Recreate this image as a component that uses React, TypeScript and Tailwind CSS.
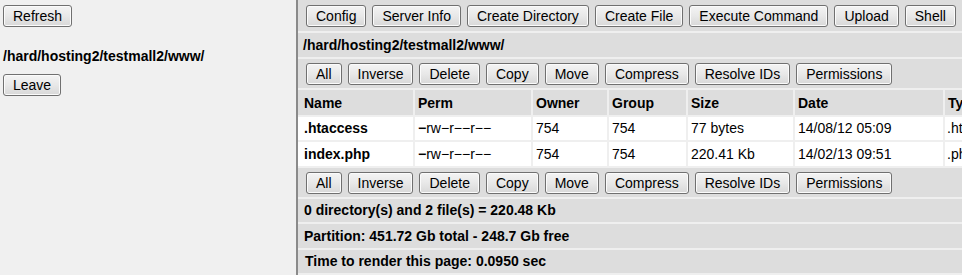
import React from 'react';

const Btn: React.FC<{ children: React.ReactNode }> = ({ children }) => (
  <button className="h-[22px] shrink-0 whitespace-nowrap rounded-[3px] border border-[#707070] bg-linear-to-b from-[#f4f4f4] via-[#e8e8e8] to-[#d8d8d8] px-[9px] text-[14px] leading-none text-black shadow-[inset_0_0_0_1px_#fbfbfb]">
    {children}
  </button>
);

const actions = ['All', 'Inverse', 'Delete', 'Copy', 'Move', 'Compress', 'Resolve IDs', 'Permissions'];

const files = [
  { name: '.htaccess', owner: '754', group: '754', size: '77 bytes', date: '14/08/12 05:09', type: '.htaccess', h: 'h-[23px]' },
  { name: 'index.php', owner: '754', group: '754', size: '220.41 Kb', date: '14/02/13 09:51', type: '.php', h: 'h-[24px]' },
];

const cols = 'grid grid-cols-[115px_116px_74px_77px_105px_148px_120px] gap-x-[2px]';

const ActionRow: React.FC<{ h: string }> = ({ h }) => (
  <div className={`flex items-center gap-[6px] bg-[#dddddd] pl-[8px] ${h}`}>
    {actions.map((a) => (
      <Btn key={a}>{a}</Btn>
    ))}
  </div>
);

const App: React.FC = () => {
  return (
    <div className="flex h-[275px] w-[962px] overflow-hidden font-['Liberation_Sans',Arial,sans-serif] text-[14px] text-black">
      {/* left frame */}
      <div className="w-[296px] shrink-0 bg-[#f0f0f0] pl-[3px] pt-[5px]">
        <Btn>Refresh</Btn>
        <div className="mt-[21px] font-bold leading-[16px]">/hard/hosting2/testmall2/www/</div>
        <div className="mt-[10px]">
          <Btn>Leave</Btn>
        </div>
      </div>
      <div className="w-[2px] shrink-0 bg-[#8a8a8a]" />

      {/* right frame */}
      <div className="flex min-w-0 flex-1 flex-col gap-y-[2px] overflow-hidden bg-[#efefef]">
        <div className="flex h-[31px] shrink-0 items-center gap-[6px] bg-[#dddddd] pl-[8px]">
          {['Config', 'Server Info', 'Create Directory', 'Create File', 'Execute Command', 'Upload', 'Shell'].map((b) => (
            <Btn key={b}>{b}</Btn>
          ))}
        </div>
        <div className="flex h-[24px] shrink-0 items-center bg-[#dddddd] pl-[5px] font-bold">/hard/hosting2/testmall2/www/</div>
        <ActionRow h="h-[29px] shrink-0" />

        <div className="flex shrink-0 flex-col gap-y-[2px]">
          <div className={`${cols} h-[25px] items-center`}>
            {['Name', 'Perm', 'Owner', 'Group', 'Size', 'Date', 'Type'].map((c, i) => (
              <div key={c} className={`flex h-full items-center bg-[#dddddd] pt-[1px] font-bold ${i === 0 ? 'pl-[6px]' : 'pl-[3px]'}`}>
                {c}
              </div>
            ))}
          </div>
          {files.map((f) => (
            <div key={f.name} className={`${cols} ${f.h}`}>
              <div className="flex items-center bg-white pl-[6px] font-bold">{f.name}</div>
              <div className="flex items-center bg-white pl-[3px]">
                <b>−</b>
                <span>rw−r−−r−−</span>
              </div>
              <div className="flex items-center bg-white pl-[3px]">{f.owner}</div>
              <div className="flex items-center bg-white pl-[3px]">{f.group}</div>
              <div className="flex items-center bg-white pl-[3px]">{f.size}</div>
              <div className="flex items-center bg-white pl-[3px]">{f.date}</div>
              <div className="flex items-center bg-white pl-[2px]">{f.type}</div>
            </div>
          ))}
        </div>

        <ActionRow h="h-[29px] shrink-0" />
        <div className="flex h-[23px] shrink-0 items-center bg-[#dddddd] pl-[6px] font-bold">0 directory(s) and 2 file(s) = 220.48 Kb</div>
        <div className="flex h-[24px] shrink-0 items-center bg-[#dddddd] pl-[6px] font-bold">Partition: 451.72 Gb total - 248.7 Gb free</div>
        <div className="flex h-[23px] shrink-0 items-center bg-[#dddddd] pl-[7px] font-bold">Time to render this page: 0.0950 sec</div>
        <div className="flex-1 bg-[#dddddd]" />
      </div>
    </div>
  );
};

export default App;
